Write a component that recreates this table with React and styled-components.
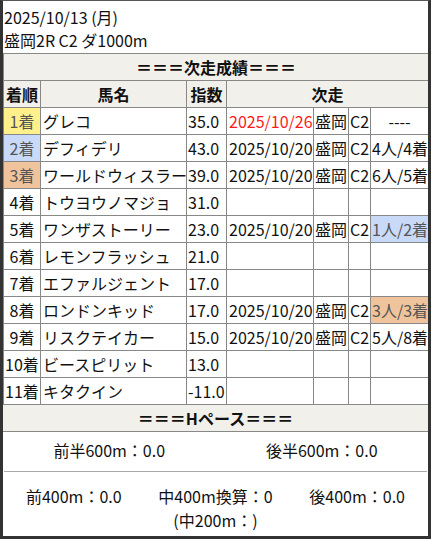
import React from "react";
import styled, { createGlobalStyle } from "styled-components";

const Global = createGlobalStyle`
  html, body { margin: 0; padding: 0; background: #fff; }
  body { font-family: "Noto Sans CJK JP", "Noto Sans", sans-serif; color: #111; }
`;

const Frame = styled.div`
  width: 431px;
  height: 539px;
  box-sizing: border-box;
  border: 3px solid #333;
  border-top: 1px solid #555;
  display: flex;
  flex-direction: column;
  font-size: 16px;
  overflow: hidden;
`;

const Info = styled.div`
  padding: 5px 1px 1px;
  line-height: 23px;
`;

const Table = styled.table`
  width: 100%;
  border-collapse: collapse;
  table-layout: fixed;
`;

const Th = styled.th`
  border: 1px solid #888;
  background: #f2f0eb;
  font-weight: 700;
  height: 26px;
  line-height: 26px;
  padding: 0;
  text-align: center;
  white-space: nowrap;
  overflow: hidden;
`;

const Td = styled.td`
  border: 1px solid #888;
  height: 26px;
  line-height: 26px;
  padding: 0 1px;
  white-space: nowrap;
  overflow: hidden;
  text-align: ${(p) => p.$align || "left"};
  background: ${(p) => p.$bg || "transparent"};
  color: ${(p) => (p.$red ? "#ff1a1a" : p.$bg ? "#555" : "#111")};
`;

const NameTd = styled(Td)`
  padding-left: 2px;
`;

const DateTd = styled(Td)`
  padding-left: 2px;
`;

const PaceTitle = styled.div`
  height: 26px;
  line-height: 26px;
  background: #f2f0eb;
  border-bottom: 1px solid #888;
  text-align: center;
  font-weight: 700;
`;

const PaceGrid = styled.div`
  display: grid;
  grid-template-columns: repeat(${(p) => p.$cols}, 1fr);
  line-height: 24px;
  text-align: center;
  padding: ${(p) => p.$pad};
`;

const Divider = styled.div`
  height: 1px;
  background: #aaa;
  margin: 0 1px;
`;

const COLORS = {
  yellow: "#fff08c",
  blue: "#c9daf8",
  orange: "#efc49c",
};

const rows = [
  { pos: "1着", bg: COLORS.yellow, name: "グレコ", idx: "35.0", date: "2025/10/26", red: true, place: "盛岡", cls: "C2", res: "----", center: true },
  { pos: "2着", bg: COLORS.blue, name: "デフィデリ", idx: "43.0", date: "2025/10/20", place: "盛岡", cls: "C2", res: "4人/4着" },
  { pos: "3着", bg: COLORS.orange, name: "ワールドウィスラー", idx: "39.0", date: "2025/10/20", place: "盛岡", cls: "C2", res: "6人/5着" },
  { pos: "4着", name: "トウヨウノマジョ", idx: "31.0" },
  { pos: "5着", name: "ワンザストーリー", idx: "23.0", date: "2025/10/20", place: "盛岡", cls: "C2", res: "1人/2着", resBg: COLORS.blue },
  { pos: "6着", name: "レモンフラッシュ", idx: "21.0" },
  { pos: "7着", name: "エファルジェント", idx: "17.0" },
  { pos: "8着", name: "ロンドンキッド", idx: "17.0", date: "2025/10/20", place: "盛岡", cls: "C2", res: "3人/3着", resBg: COLORS.orange },
  { pos: "9着", name: "リスクテイカー", idx: "15.0", date: "2025/10/20", place: "盛岡", cls: "C2", res: "5人/8着" },
  { pos: "10着", name: "ビースピリット", idx: "13.0" },
  { pos: "11着", name: "キタクイン", idx: "-11.0" },
];

export default function App() {
  return (
    <>
      <Global />
      <Frame>
        <Info>
          <div>2025/10/13 (月)</div>
          <div>盛岡2R C2 ダ1000m</div>
        </Info>
        <Table>
          <colgroup>
            <col style={{ width: 37 }} />
            <col style={{ width: 146 }} />
            <col style={{ width: 40 }} />
            <col style={{ width: 87 }} />
            <col style={{ width: 35 }} />
            <col style={{ width: 22 }} />
            <col style={{ width: 58 }} />
          </colgroup>
          <thead>
            <tr>
              <Th colSpan={7}>＝＝＝次走成績＝＝＝</Th>
            </tr>
            <tr>
              <Th>着順</Th>
              <Th>馬名</Th>
              <Th>指数</Th>
              <Th colSpan={4}>次走</Th>
            </tr>
          </thead>
          <tbody>
            {rows.map((r) => (
              <tr key={r.pos}>
                <Td $align="center" $bg={r.bg}>{r.pos}</Td>
                <NameTd>{r.name}</NameTd>
                <Td>{r.idx}</Td>
                <DateTd $red={r.red}>{r.date || ""}</DateTd>
                <Td>{r.place || ""}</Td>
                <Td>{r.cls || ""}</Td>
                <Td $align={r.center ? "center" : "left"} $bg={r.resBg}>{r.res || ""}</Td>
              </tr>
            ))}
          </tbody>
        </Table>
        <PaceTitle>＝＝＝Hペース＝＝＝</PaceTitle>
        <PaceGrid $cols={2} $pad="6px 0 9px">
          <div>前半600m：0.0</div>
          <div>後半600m：0.0</div>
        </PaceGrid>
        <Divider />
        <PaceGrid $cols={3} $pad="12px 0 0">
          <div>前400m：0.0</div>
          <div>
            中400m換算：0
            <br />
            (中200m：)
          </div>
          <div>後400m：0.0</div>
        </PaceGrid>
      </Frame>
    </>
  );
}
